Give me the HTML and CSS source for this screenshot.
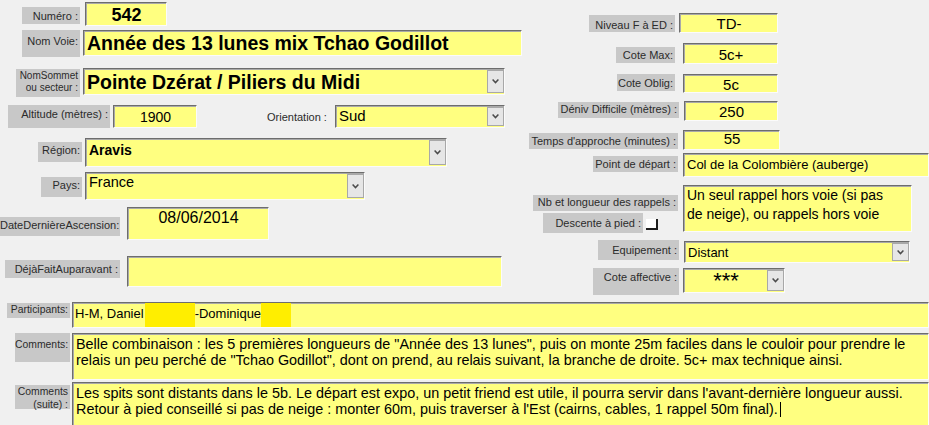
FILE: index.html
```html
<!DOCTYPE html>
<html lang="fr">
<head>
    <meta charset="UTF-8">
    <title>Fiche voie</title>
    <link rel="stylesheet" href="styles.css">
</head>
<body>
<div class="form">

    <div class="top">
        <!-- Colonne gauche : identification de la voie -->
        <div class="left">
            <div class="row r-numero">
                <div class="label l-numero">Numéro :</div>
                <div class="field f-numero"><span class="val center num">542</span></div>
            </div>
            <div class="row r-voie">
                <div class="label l-voie">Nom Voie:</div>
                <div class="field f-voie"><span class="val big">Année des 13 lunes mix Tchao Godillot</span></div>
            </div>
            <div class="row r-sommet">
                <div class="label l-sommet">NomSommet<br>ou secteur :</div>
                <div class="field f-sommet">
                    <span class="val big">Pointe Dzérat / Piliers du Midi</span>
                    <span class="drop"><svg width="7" height="5" viewBox="0 0 7 5"><path d="M0.6 0.6 L3.5 3.6 L6.4 0.6" fill="none" stroke="#4a4a4a" stroke-width="1.5"/></svg></span>
                </div>
            </div>
            <div class="row r-alt">
                <div class="label l-alt">Altitude (mètres) :</div>
                <div class="field f-alt"><span class="val center">1900</span></div>
                <div class="orient">Orientation :</div>
                <div class="field f-orient">
                    <span class="val">Sud</span>
                    <span class="drop"><svg width="7" height="5" viewBox="0 0 7 5"><path d="M0.6 0.6 L3.5 3.6 L6.4 0.6" fill="none" stroke="#4a4a4a" stroke-width="1.5"/></svg></span>
                </div>
            </div>
            <div class="row r-region">
                <div class="label l-region">Région:</div>
                <div class="field f-region">
                    <span class="val">Aravis</span>
                    <span class="drop"><svg width="7" height="5" viewBox="0 0 7 5"><path d="M0.6 0.6 L3.5 3.6 L6.4 0.6" fill="none" stroke="#4a4a4a" stroke-width="1.5"/></svg></span>
                </div>
            </div>
            <div class="row r-pays">
                <div class="label l-pays">Pays:</div>
                <div class="field f-pays">
                    <span class="val">France</span>
                    <span class="drop"><svg width="7" height="5" viewBox="0 0 7 5"><path d="M0.6 0.6 L3.5 3.6 L6.4 0.6" fill="none" stroke="#4a4a4a" stroke-width="1.5"/></svg></span>
                </div>
            </div>
            <div class="row r-date">
                <div class="label l-date">DateDernièreAscension:</div>
                <div class="field f-date"><span class="val center">08/06/2014</span></div>
            </div>
            <div class="row r-deja">
                <div class="label l-deja">DéjàFaitAuparavant :</div>
                <div class="field f-deja"><span class="val"></span></div>
            </div>
        </div>

        <!-- Colonne droite : cotation et approche -->
        <div class="right">
            <div class="row r-niveau">
                <div class="label l-niveau">Niveau F à ED :</div>
                <div class="field f-niveau"><span class="val mid">TD-</span></div>
            </div>
            <div class="row r-cmax">
                <div class="label l-cmax">Cote Max:</div>
                <div class="field f-cmax"><span class="val mid">5c+</span></div>
            </div>
            <div class="row r-cobl">
                <div class="label l-cobl">Cote Oblig:</div>
                <div class="field f-cobl"><span class="val mid">5c</span></div>
            </div>
            <div class="row r-deniv">
                <div class="label l-deniv">Déniv Difficile (mètres) :</div>
                <div class="field f-deniv"><span class="val mid">250</span></div>
            </div>
            <div class="row r-temps">
                <div class="label l-temps">Temps d'approche (minutes) :</div>
                <div class="field f-temps"><span class="val mid">55</span></div>
            </div>
            <div class="row r-point">
                <div class="label l-point">Point de départ :</div>
                <div class="field f-point"><span class="val">Col de la Colombière (auberge)</span></div>
            </div>
            <div class="row r-nb">
                <div class="nb-labels">
                    <div class="label l-nb">Nb et longueur des rappels :</div>
                    <div class="descente">
                        <div class="label l-desc">Descente à pied :</div>
                        <span class="check"></span>
                    </div>
                </div>
                <div class="field f-nb"><span class="val wrap">Un seul rappel hors voie (si pas de neige), ou rappels hors voie</span></div>
            </div>
            <div class="row r-equip">
                <div class="label l-equip">Equipement :</div>
                <div class="field f-equip">
                    <span class="val">Distant</span>
                    <span class="drop"><svg width="7" height="5" viewBox="0 0 7 5"><path d="M0.6 0.6 L3.5 3.6 L6.4 0.6" fill="none" stroke="#4a4a4a" stroke-width="1.5"/></svg></span>
                </div>
            </div>
            <div class="row r-cote">
                <div class="label l-cote">Cote affective :</div>
                <div class="field f-cote">
                    <span class="val center stars">***</span>
                    <span class="drop"><svg width="7" height="5" viewBox="0 0 7 5"><path d="M0.6 0.6 L3.5 3.6 L6.4 0.6" fill="none" stroke="#4a4a4a" stroke-width="1.5"/></svg></span>
                </div>
            </div>
        </div>
    </div>

    <!-- Bas du formulaire : participants et commentaires -->
    <div class="row r-part">
        <div class="label small l-part">Participants:</div>
        <div class="field wide f-part">
            <span class="val parts"><span>H-M, Daniel</span><span class="redact r1"></span><span>-Dominique</span><span class="redact r2"></span></span>
        </div>
    </div>
    <div class="row r-comm">
        <div class="label small l-comm">Comments:</div>
        <div class="field wide f-comm"><span class="val wrap">Belle combinaison : les 5 premières longueurs de "Année des 13 lunes", puis on monte 25m faciles dans le couloir pour prendre le relais un peu perché de "Tchao Godillot", dont on prend, au relais suivant, la branche de droite. 5c+ max technique ainsi.</span></div>
    </div>
    <div class="row r-suite">
        <div class="label small l-suite">Comments<br>(suite) :</div>
        <div class="field wide f-suite"><span class="val wrap">Les spits sont distants dans le 5b. Le départ est expo, un petit friend est utile, il pourra servir dans l'avant-dernière longueur aussi. Retour à pied conseillé si pas de neige : monter 60m, puis traverser à l'Est (cairns, cables, 1 rappel 50m final).<span class="caret"></span></span></div>
    </div>

</div>
</body>
</html>
```

FILE: styles.css
```css
/* Fond du formulaire */
body {
    margin: 0;
    width: 929px;
    height: 425px;
    overflow: hidden;
    background-color: #f0f0f0;
    font-family: "Liberation Sans", Arial, sans-serif;
    color: #000;
}

.form {
    padding-top: 2px;
}

.top {
    display: flex;
    height: 300px;
}

.left {
    flex: none;
    width: 525px;
}

.right {
    flex: 1;
    padding-top: 11px;
}

.row {
    display: flex;
    align-items: flex-start;
}

/* Etiquettes grises */
.label {
    flex: none;
    box-sizing: border-box;
    background-color: #c8c8c8;
    color: #2b2b2b;
    font-size: 11px;
    line-height: 14px;
    text-align: right;
    padding-right: 2px;
    white-space: nowrap;
}

.label.small {
    font-size: 10.4px;
}

/* Zones de saisie jaunes */
.field {
    flex: none;
    box-sizing: border-box;
    display: flex;
    background-color: #ffff80;
    border: 1px solid;
    border-color: #6d6d6d #fbfbfb #fbfbfb #6d6d6d;
    box-shadow: inset 1px 1px 0 #a9a9a9;
    overflow: hidden;
}

.field.wide {
    flex: 1;
}

.val {
    flex: 1;
    min-width: 0;
    padding: 1px 2px 0 3px;
    font-size: 14px;
    line-height: 16px;
    white-space: nowrap;
    overflow: hidden;
}

.val.wrap {
    white-space: normal;
}

.center {
    text-align: center;
}

.num {
    font-size: 18px;
    line-height: 20px;
    font-weight: bold;
    padding-top: 2px;
}

.big {
    font-size: 19.5px;
    line-height: 22px;
    font-weight: bold;
}

.mid {
    font-size: 15px;
    line-height: 16px;
    text-align: center;
    padding-top: 2px;
}

/* Bouton de liste deroulante */
.drop {
    flex: none;
    box-sizing: border-box;
    width: 17px;
    margin: 1px 0 1px 0;
    background-color: #e6e6e6;
    border: 1px solid #a8a8a8;
    display: flex;
    align-items: center;
    justify-content: center;
}

.check {
    flex: none;
    box-sizing: border-box;
    width: 12px;
    height: 11px;
    margin: 6px 0 0 3px;
    background-color: #fff;
    border-right: 2px solid #1e1e1e;
    border-bottom: 2px solid #1e1e1e;
}

.orient {
    flex: none;
    width: 63px;
    margin: 5px 0 0 70px;
    font-size: 11px;
    line-height: 14px;
    color: #2b2b2b;
    white-space: nowrap;
}

/* ---- colonne gauche ---- */
.r-numero { height: 28px; }
.l-numero { margin: 5px 0 0 22px; width: 58px; height: 17px; padding-top: 2px; }
.f-numero { margin-left: 5px; width: 82px; height: 24px; }

.r-voie { height: 38px; }
.l-voie { margin-left: 22px; width: 58px; height: 27px; padding-top: 4px; }
.f-voie { margin-left: 3px; width: 439px; height: 26px; }
.f-voie .val { padding-top: 1px; }

.r-sommet { height: 37px; }
.l-sommet { margin: 1px 0 0 16px; width: 64px; height: 28px; padding-top: 1px; font-size: 10px; line-height: 12px; }
.f-sommet { margin-left: 3px; width: 422px; height: 27px; }
.f-sommet .val { padding-top: 2px; }

.r-alt { height: 33px; }
.l-alt { margin-left: 8px; width: 102px; height: 23px; padding-top: 2px; }
.f-alt { margin-left: 3px; width: 84px; height: 23px; }
.f-alt .val { padding-top: 3px; }
.f-orient { margin-left: 5px; width: 170px; height: 23px; }
.f-orient .val { font-size: 15px; line-height: 17px; padding-top: 1px; }

.r-region { height: 34px; }
.l-region { margin: 4px 0 0 38px; width: 44px; height: 20px; padding-top: 1px; }
.f-region { margin-left: 3px; width: 362px; height: 29px; }
.f-region .val { font-weight: bold; padding-top: 3px; }

.r-pays { height: 35px; }
.l-pays { margin: 5px 0 0 41px; width: 41px; height: 20px; padding-top: 1px; }
.f-pays { margin-left: 3px; width: 280px; height: 28px; }
.f-pays .val { font-size: 14.5px; line-height: 17px; }

.r-date { height: 49px; }
.l-date { margin-top: 10px; width: 120px; height: 19px; padding: 1px 1px 0 0; }
.f-date { margin-left: 7px; width: 142px; height: 33px; }
.f-date .val { font-size: 16px; line-height: 18px; }

.r-deja { height: 31px; }
.l-deja { margin: 4px 0 0 5px; width: 115px; height: 18px; padding-top: 2px; }
.f-deja { margin-left: 7px; width: 375px; height: 31px; }

/* ---- colonne droite ---- */
.r-niveau { height: 30px; }
.l-niveau { margin: 2px 0 0 64px; width: 86px; height: 17px; padding-top: 3px; }
.f-niveau { margin-left: 4px; width: 99px; height: 20px; }

.r-cmax { height: 31px; }
.l-cmax { margin: 4px 0 0 91px; width: 59px; height: 16px; padding-top: 1px; }
.f-cmax { margin-left: 8px; width: 95px; height: 21px; }
.f-cmax .val { padding-top: 3px; }

.r-cobl { height: 27px; }
.l-cobl { margin-left: 92px; width: 58px; height: 17px; padding-top: 2px; }
.f-cobl { margin-left: 8px; width: 95px; height: 19px; }

.r-deniv { height: 29px; }
.l-deniv { margin: 1px 0 0 33px; width: 121px; height: 16px; }
.f-deniv { margin-left: 5px; width: 94px; height: 20px; }

.r-temps { height: 23px; }
.l-temps { margin: 3px 0 0 4px; width: 149px; height: 16px; padding-top: 1px; }
.f-temps { margin-left: 5px; width: 97px; height: 20px; }
.f-temps .val { padding-top: 0; }

.r-point { height: 32px; }
.l-point { margin: 3px 0 0 68px; width: 85px; height: 16px; padding-top: 1px; }
.f-point { margin-left: 5px; width: 246px; height: 24px; }
.f-point .val { font-size: 13px; padding-top: 3px; }

.r-nb { height: 55px; }
.nb-labels { flex: none; width: 154px; }
.l-nb { margin: 10px 0 0 8px; width: 145px; height: 16px; }
.descente { display: flex; align-items: flex-start; margin-top: 2px; }
.l-desc { margin-left: 18px; width: 100px; height: 20px; padding-top: 3px; }
.f-nb { margin-left: 4px; width: 229px; height: 47px; }
.f-nb .val { line-height: 19px; padding: 0 14px 0 3px; }

.r-equip { height: 28px; }
.l-equip { margin-left: 73px; width: 81px; height: 20px; padding-top: 3px; }
.f-equip { margin: 1px 0 0 5px; width: 226px; height: 22px; }
.f-equip .val { font-size: 13px; padding-top: 3px; }

.l-cote { margin-left: 68px; width: 86px; height: 27px; padding-top: 2px; }
.f-cote { margin-left: 4px; width: 102px; height: 25px; overflow: visible; }
.stars { font-size: 22px; line-height: 22px; padding-top: 1px; overflow: visible; }

/* ---- bas du formulaire ---- */
.r-part { height: 31px; }
.l-part { margin: 1px 0 0 7px; width: 63px; height: 15px; padding-top: 0; }
.f-part { margin-left: 2px; height: 26px; }

.parts {
    display: flex;
    padding: 0 0 0 2px;
    font-size: 13px;
}

.parts span {
    padding-top: 3px;
}

.parts .redact {
    align-self: stretch;
    padding: 0;
    background-color: #ffee00;
}

.redact.r1 { width: 50px; margin-left: 1px; }
.redact.r2 { width: 30px; }

.r-comm { height: 49px; }
.l-comm { margin-left: 15px; width: 55px; height: 29px; padding-top: 5px; }
.f-comm { margin-left: 2px; height: 47px; }
.f-comm .val { font-size: 14.4px; line-height: 16px; padding-top: 2px; }

.l-suite { margin: 3px 0 0 15px; width: 55px; height: 24px; line-height: 13px; }
.f-suite { margin-left: 2px; height: 44px; }
.f-suite .val { font-size: 14.4px; line-height: 16px; padding-top: 2px; }

.caret {
    display: inline-block;
    width: 1px;
    height: 15px;
    margin-left: 2px;
    vertical-align: -3px;
    background-color: #000;
}
```
